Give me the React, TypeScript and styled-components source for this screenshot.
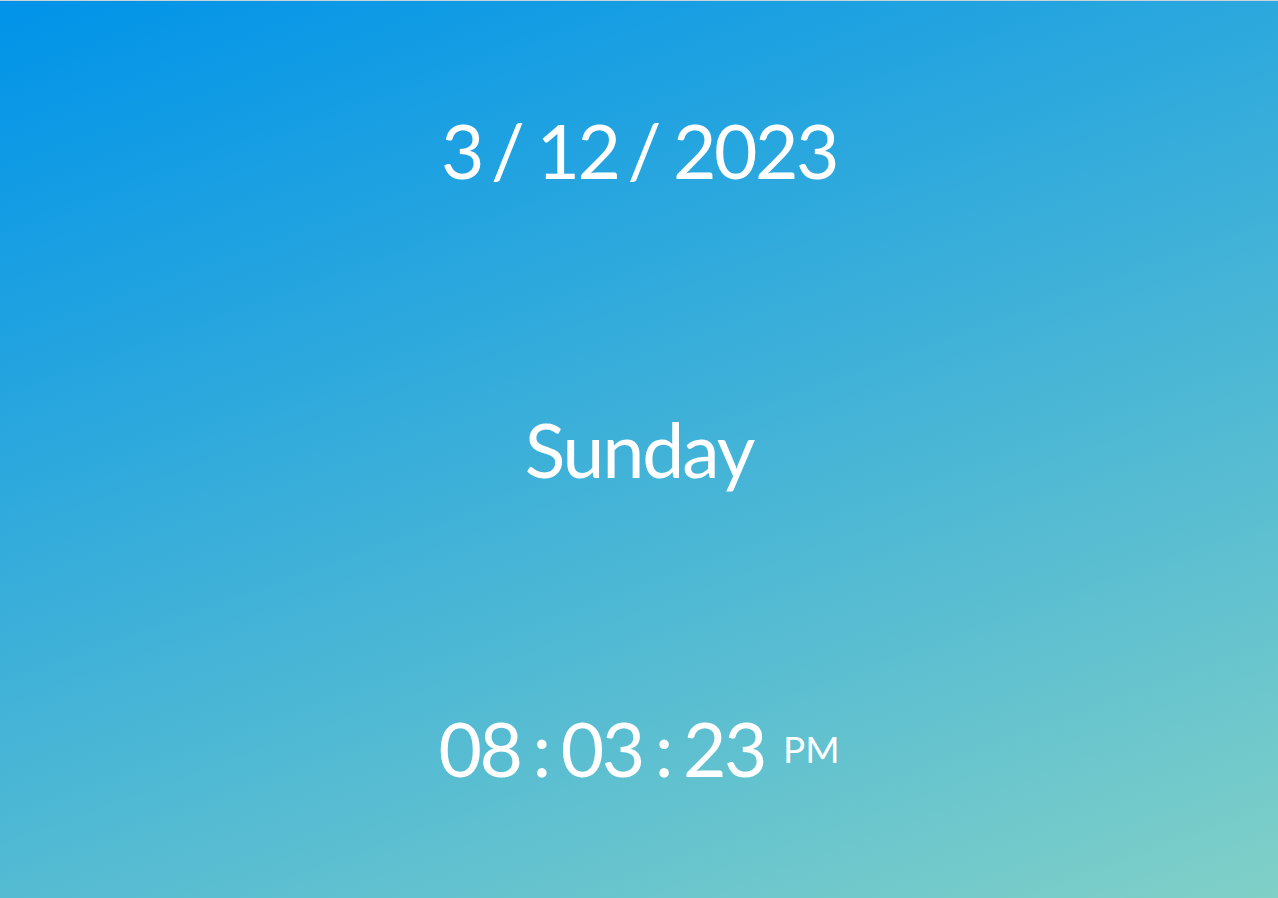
import React from "react";
import styled, { createGlobalStyle } from "styled-components";

const Global = createGlobalStyle`
  html, body { margin: 0; padding: 0; }
  body { font-family: "Lato", "Open Sans", sans-serif; }
`;

const Page = styled.main`
  box-sizing: border-box;
  height: 898px;
  border-top: 1px solid #c9d3da;
  background-image: linear-gradient(160deg, #0093e9 0%, #80d0c7 100%);
  display: flex;
  flex-direction: column;
  justify-content: space-around;
  align-items: center;
  color: #ffffff;
  font-family: "Lato", "Open Sans", sans-serif;
`;

const Line = styled.div<{ $spacing?: number }>`
  display: flex;
  align-items: center;
  justify-content: center;
  font-size: 75px;
  line-height: 1;
  font-weight: 400;
  letter-spacing: ${(p) => p.$spacing ?? -2.5}px;
`;

const Sep = styled.span<{ $before: number; $after: number }>`
  margin-left: ${(p) => p.$before}px;
  margin-right: ${(p) => p.$after}px;
`;

const Meridiem = styled.span`
  font-size: 37px;
  letter-spacing: 0;
  margin-left: 18px;
`;

export default function App() {
  return (
    <>
      <Global />
      <Page>
        <Line>
          <span>3</span>
          <Sep $before={9} $after={14}>/</Sep>
          <span>12</span>
          <Sep $before={9} $after={14}>/</Sep>
          <span>2023</span>
        </Line>
        <Line $spacing={-2}>Sunday</Line>
        <Line>
          <span>08</span>
          <Sep $before={12} $after={12}>:</Sep>
          <span>03</span>
          <Sep $before={12} $after={12}>:</Sep>
          <span>23</span>
          <Meridiem>PM</Meridiem>
        </Line>
      </Page>
    </>
  );
}
